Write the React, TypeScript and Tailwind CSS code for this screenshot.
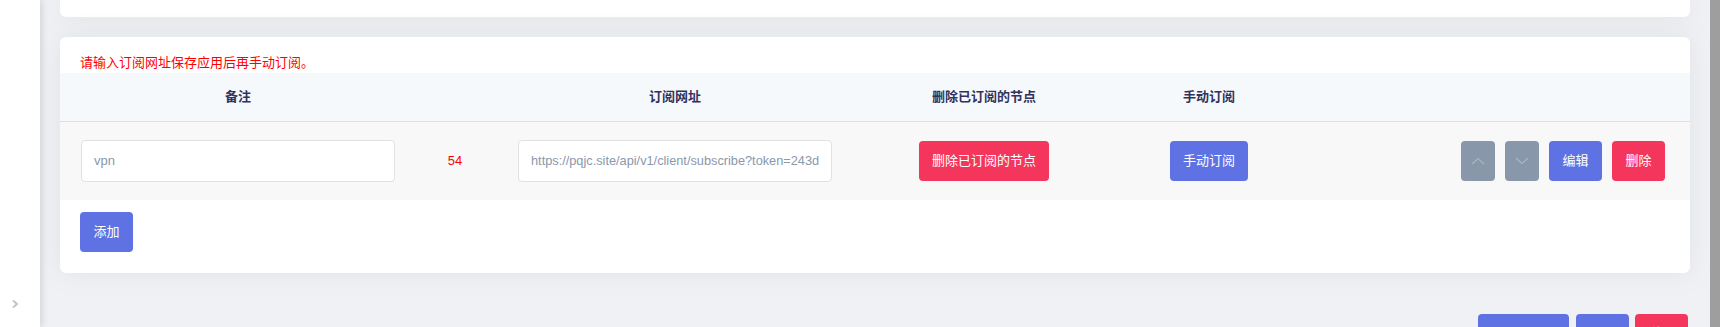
const font = "font-['Liberation_Sans','Noto_Sans_CJK_SC',sans-serif]";

type Sub = {
  id: number;
  remark: string;
  count: number;
  url: string;
};

const SUBS: Sub[] = [
  {
    id: 1,
    remark: "vpn",
    count: 54,
    url: "https://pqjc.site/api/v1/client/subscribe?token=243d",
  },
];

function Chevron({ dir }: { dir: "up" | "down" }) {
  return (
    <svg width="14" height="8" viewBox="0 0 14 8" fill="none">
      <polyline
        points={dir === "up" ? "1,7 7,1.5 13,7" : "1,1 7,6.5 13,1"}
        stroke="#aab4c2"
        strokeWidth="1.2"
      />
    </svg>
  );
}

export default function App() {
  return (
    <div className={`flex h-[327px] w-[1720px] overflow-hidden bg-[#f0f1f4] ${font}`}>
      {/* side bar */}
      <div className="relative z-10 flex w-[40px] shrink-0 flex-col justify-end bg-white pb-[18px] pl-[11px] shadow-[2px_0_7px_rgba(0,0,0,0.13)]">
        <svg width="8" height="10" viewBox="0 0 8 10" fill="none">
          <polyline points="2,1.5 6,5 2,8.5" stroke="#c0c4cc" strokeWidth="2" />
        </svg>
      </div>

      <main className="flex min-w-0 flex-1 flex-col px-[20px]">
        <div className="h-[17px] shrink-0 rounded-b-[6px] bg-white shadow-[0_0_1.5rem_rgba(136,152,170,0.15)]" />

        <div className="mt-[20px] shrink-0 rounded-[6px] bg-white pt-[15px] pb-[21px] shadow-[0_0_1.5rem_rgba(136,152,170,0.15)]">
          <p className="px-[20px] text-[13px] leading-[21px] text-[#ff0000]">
            请输入订阅网址保存应用后再手动订阅。
          </p>

          <div className="flex h-[49px] items-center border-b border-[#dcdfe3] bg-[#f6f9fc] text-[13px] font-semibold text-[#32325d]">
            <div className="w-[356px] text-center">备注</div>
            <div className="w-[78px]" />
            <div className="w-[362px] text-center">订阅网址</div>
            <div className="w-[256px] text-center">删除已订阅的节点</div>
            <div className="w-[194px] text-center">手动订阅</div>
            <div className="flex-1" />
          </div>

          {SUBS.map((s) => (
            <div key={s.id} className="flex h-[78px] items-center bg-[#f8f8f8] text-[13px]">
              <div className="flex w-[356px] justify-center">
                <div className="flex h-[42px] w-[314px] items-center overflow-hidden rounded-[4px] border border-[#dee1e6] bg-white px-[12px] text-[13px] text-[#8a98ab]">
                  {s.remark}
                </div>
              </div>
              <div className="w-[78px] text-center text-[#ff0000]">{s.count}</div>
              <div className="flex w-[362px] justify-center">
                <div className="flex h-[42px] w-[314px] items-center overflow-hidden whitespace-nowrap rounded-[4px] border border-[#dee1e6] bg-white px-[12px] text-[12.75px] text-[#8a98ab]">
                  {s.url}
                </div>
              </div>
              <div className="flex w-[256px] justify-center">
                <button className="h-[40px] rounded-[4px] bg-[#f5365c] px-[13px] text-white">
                  删除已订阅的节点
                </button>
              </div>
              <div className="flex w-[194px] justify-center">
                <button className="h-[40px] rounded-[4px] bg-[#5e72e4] px-[13px] text-white">
                  手动订阅
                </button>
              </div>
              <div className="flex flex-1 items-center justify-end gap-[10px] pr-[25px]">
                <button className="flex h-[40px] w-[34px] items-center justify-center rounded-[4px] bg-[#8898aa]">
                  <Chevron dir="up" />
                </button>
                <button className="flex h-[40px] w-[34px] items-center justify-center rounded-[4px] bg-[#8898aa]">
                  <Chevron dir="down" />
                </button>
                <button className="h-[40px] w-[53px] rounded-[4px] bg-[#5e72e4] text-white">编辑</button>
                <button className="h-[40px] w-[53px] rounded-[4px] bg-[#f5365c] text-white">删除</button>
              </div>
            </div>
          ))}

          <div className="mt-[12px] px-[20px]">
            <button className="h-[40px] w-[53px] rounded-[4px] bg-[#5e72e4] text-[13px] text-white">添加</button>
          </div>
        </div>

        <div className="mt-[41px] flex shrink-0 justify-end pr-[2px] text-[13px] text-white">
          <button className="h-[40px] w-[91px] rounded-[4px] bg-[#5e72e4] pt-[12px] leading-[16px]">保存并应用</button>
          <button className="ml-[7px] h-[40px] w-[53px] rounded-[4px] bg-[#5e72e4]">保存</button>
          <button className="ml-[6px] h-[40px] w-[53px] rounded-[4px] bg-[#f5365c]">重置</button>
        </div>
      </main>

      <div className="w-[10px] shrink-0 bg-[#9e9e9e]" />
    </div>
  );
}
